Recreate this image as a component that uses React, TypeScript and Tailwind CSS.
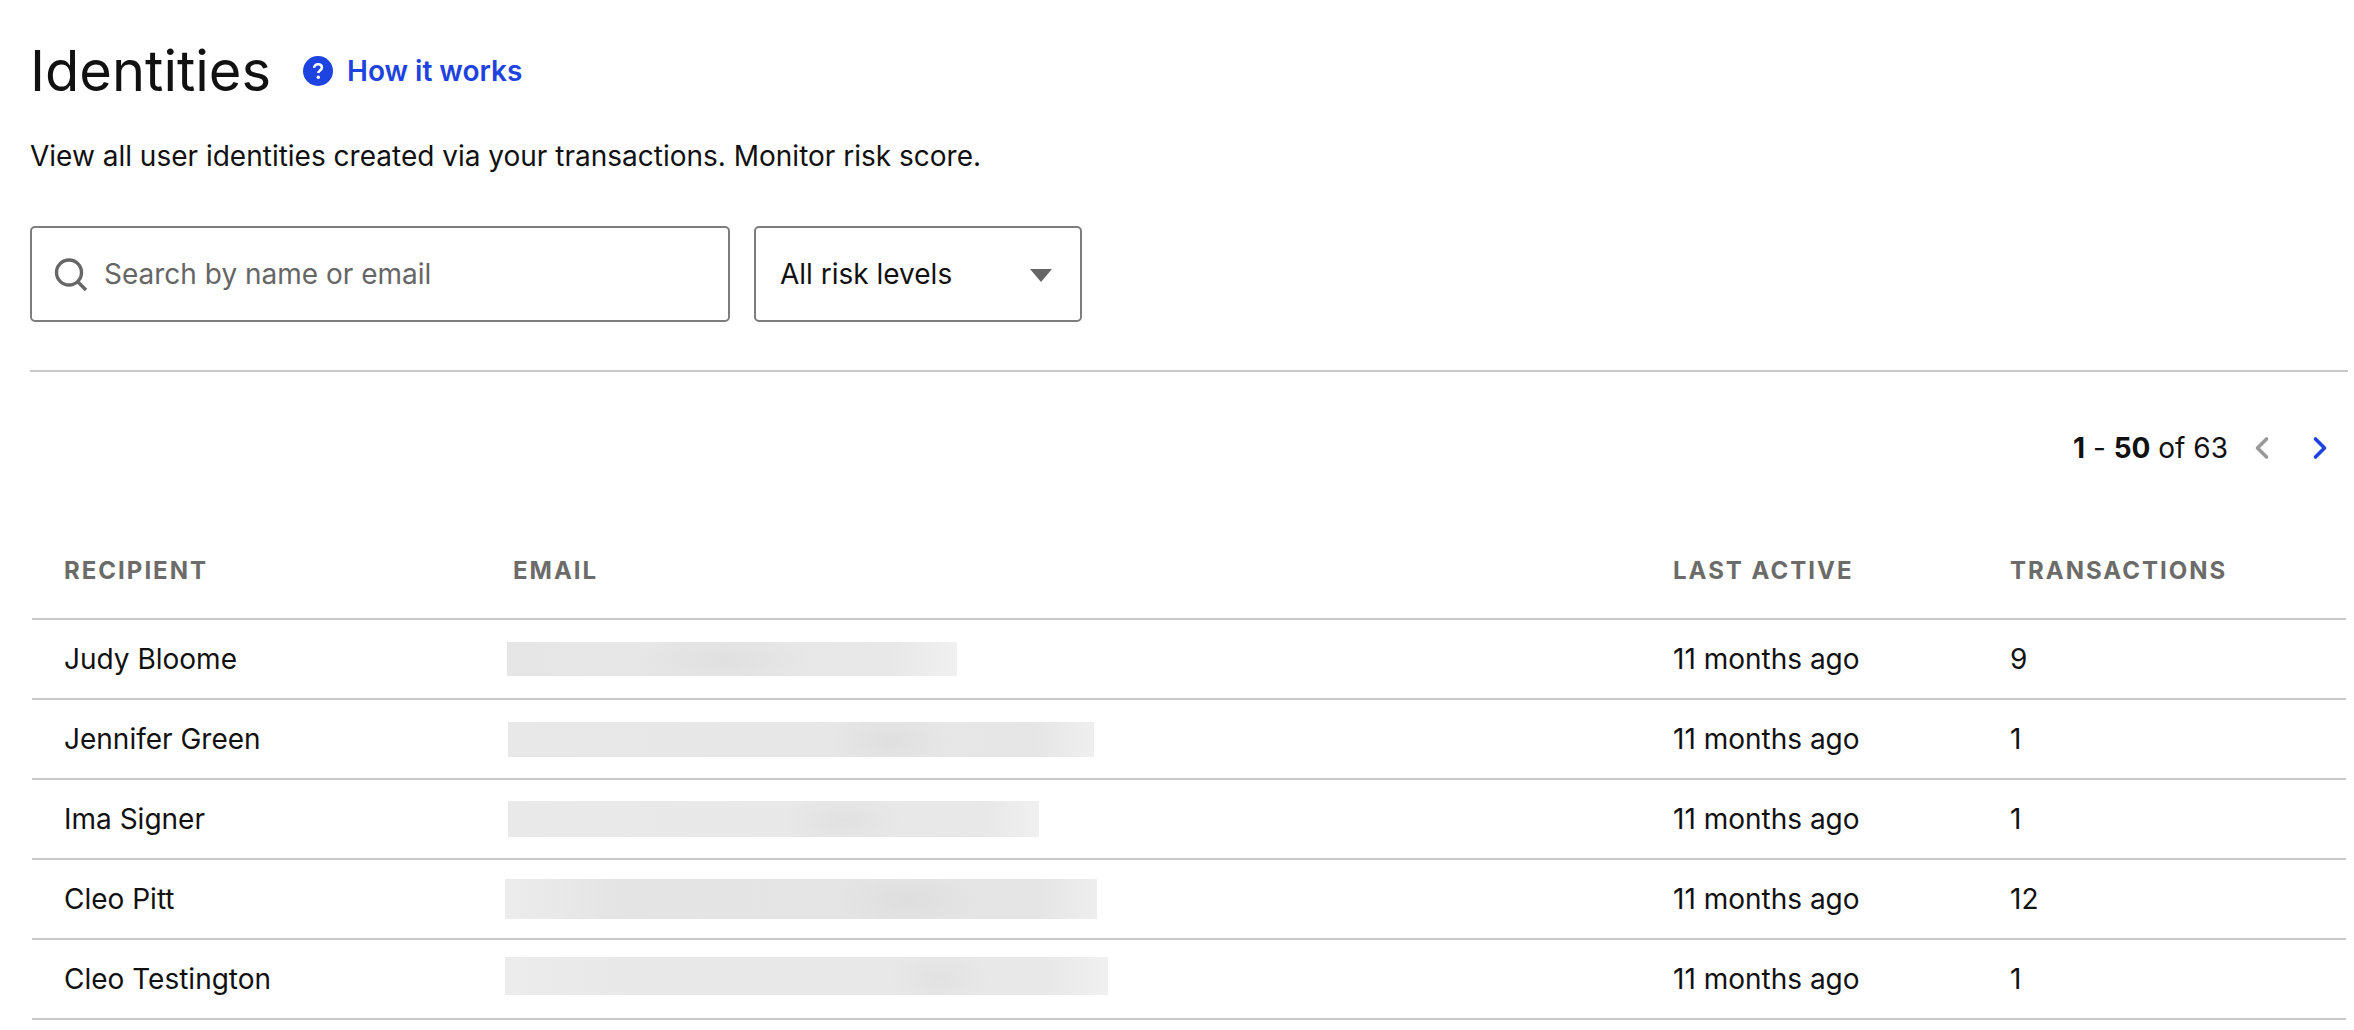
import React from "react";
import { ChevronLeft, ChevronRight } from "lucide-react";

const rows = [
  { name: "Judy Bloome", count: "9", barW: 450, barH: 34, barX: -6, barY: 0, shade: "radial-gradient(ellipse 90px 30px at 48% 55%, #e0e0e0, transparent), linear-gradient(90deg, #e6e6e6, #e8e8e8 85%, #f0f0f0)" },
  { name: "Jennifer Green", count: "1", barW: 586, barH: 35, barX: -5, barY: 0, shade: "radial-gradient(ellipse 60px 30px at 65% 55%, #dfdfdf, transparent), linear-gradient(90deg, #e8e8e8, #e6e6e6 90%, #efefef)" },
  { name: "Ima Signer", count: "1", barW: 531, barH: 36, barX: -5, barY: 0, shade: "radial-gradient(ellipse 60px 30px at 63% 55%, #e1e1e1, transparent), linear-gradient(90deg, #e9e9e9, #e8e8e8 90%, #f0f0f0)" },
  { name: "Cleo Pitt", count: "12", barW: 592, barH: 40, barX: -8, barY: 0, shade: "radial-gradient(ellipse 70px 34px at 68% 55%, #dedede, transparent), linear-gradient(90deg, #ececec, #e4e4e4 20%, #e5e5e5 90%, #eeeeee)" },
  { name: "Cleo Testington", count: "1", barW: 603, barH: 38, barX: -8, barY: -6, shade: "radial-gradient(ellipse 50px 30px at 72% 55%, #e2e2e2, transparent), linear-gradient(90deg, #ececec, #e8e8e8 20%, #e8e8e8 90%, #f0f0f0)" },
];

const gridCols = "grid grid-cols-[449px_1160px_337px_1fr] items-center";

export default function App() {
  return (
    <div className="h-[1030px] overflow-hidden bg-white pl-[30px] pr-[6px] font-['Inter',sans-serif] text-[#111111]">
      <div className="flex h-[142px] items-center">
        <h1 className="text-[56px] leading-none font-normal">Identities</h1>
        <a href="#" className="ml-[32px] flex items-center gap-[14px] text-[28px] font-semibold text-[#1d43e0]">
          <svg width="30" height="30" viewBox="0 0 30 30">
            <circle cx="15" cy="15" r="15" fill="#1d43e0" />
            <path d="M11.2 11.8c0-2.2 1.7-3.6 3.9-3.6s3.8 1.3 3.8 3.3c0 1.6-.9 2.4-2.1 3.2-1 .7-1.5 1.2-1.5 2.3" fill="none" stroke="#fff" strokeWidth="2.6" />
            <circle cx="15.3" cy="21.3" r="1.7" fill="#fff" />
          </svg>
          How it works
        </a>
      </div>
      <p className="text-[28px] leading-[28px]">View all user identities created via your transactions. Monitor risk score.</p>

      <div className="mt-[56px] flex gap-6">
        <div className="flex h-[96px] w-[700px] items-center rounded-[5px] border-2 border-[#7d7d7d] pl-[22px]">
          <svg width="34" height="33" viewBox="0 0 34 33" fill="none" stroke="#666666" strokeWidth="3.4">
            <circle cx="15" cy="14.5" r="12.5" />
            <path d="M24 24l8 8" />
          </svg>
          <span className="ml-[16px] text-[28px] text-[#666666]">Search by name or email</span>
        </div>
        <div className="flex h-[96px] w-[328px] items-center justify-between rounded-[5px] border-2 border-[#7d7d7d] pr-[28px] pl-[24px]">
          <span className="text-[28px]">All risk levels</span>
          <svg width="22" height="13" viewBox="0 0 22 13" className="mt-[3px]">
            <path d="M0 0h22L11 13z" fill="#666666" />
          </svg>
        </div>
      </div>

      <div className="mt-[48px] h-[2px] bg-[#c8c8c6]" />

      <div className="mt-[58px] flex h-[36px] items-center justify-end pr-[10px] text-[28px]">
        <span>
          <b className="font-bold">1</b> - <b className="font-bold">50</b> of 63
        </span>
        <ChevronLeft className="ml-[16px] h-[36px] w-[36px] text-[#999999]" strokeWidth={2.4} />
        <ChevronRight className="ml-[22px] h-[36px] w-[36px] text-[#1d43e0]" strokeWidth={2.4} />
      </div>

      <div className="ml-[2px] mr-[2px] mt-[64px]">
        <div className={`${gridCols} h-[90px] border-b-2 border-[#c8c8c6] pb-[6px] pl-[32px] text-[24px] font-bold tracking-[2px] text-[#6b6b69]`}>
          <div>RECIPIENT</div>
          <div>EMAIL</div>
          <div>LAST ACTIVE</div>
          <div>TRANSACTIONS</div>
        </div>
        {rows.map((row) => (
          <div key={row.name} className={`${gridCols} h-[80px] border-b-2 border-[#c8c8c6] pl-[32px] text-[28px]`}>
            <div>{row.name}</div>
            <div>
              <div
                className="blur-[0.5px]"
                style={{ width: row.barW, height: row.barH, marginLeft: row.barX, marginTop: row.barY, background: row.shade }}
              />
            </div>
            <div>11 months ago</div>
            <div>{row.count}</div>
          </div>
        ))}
      </div>
    </div>
  );
}
